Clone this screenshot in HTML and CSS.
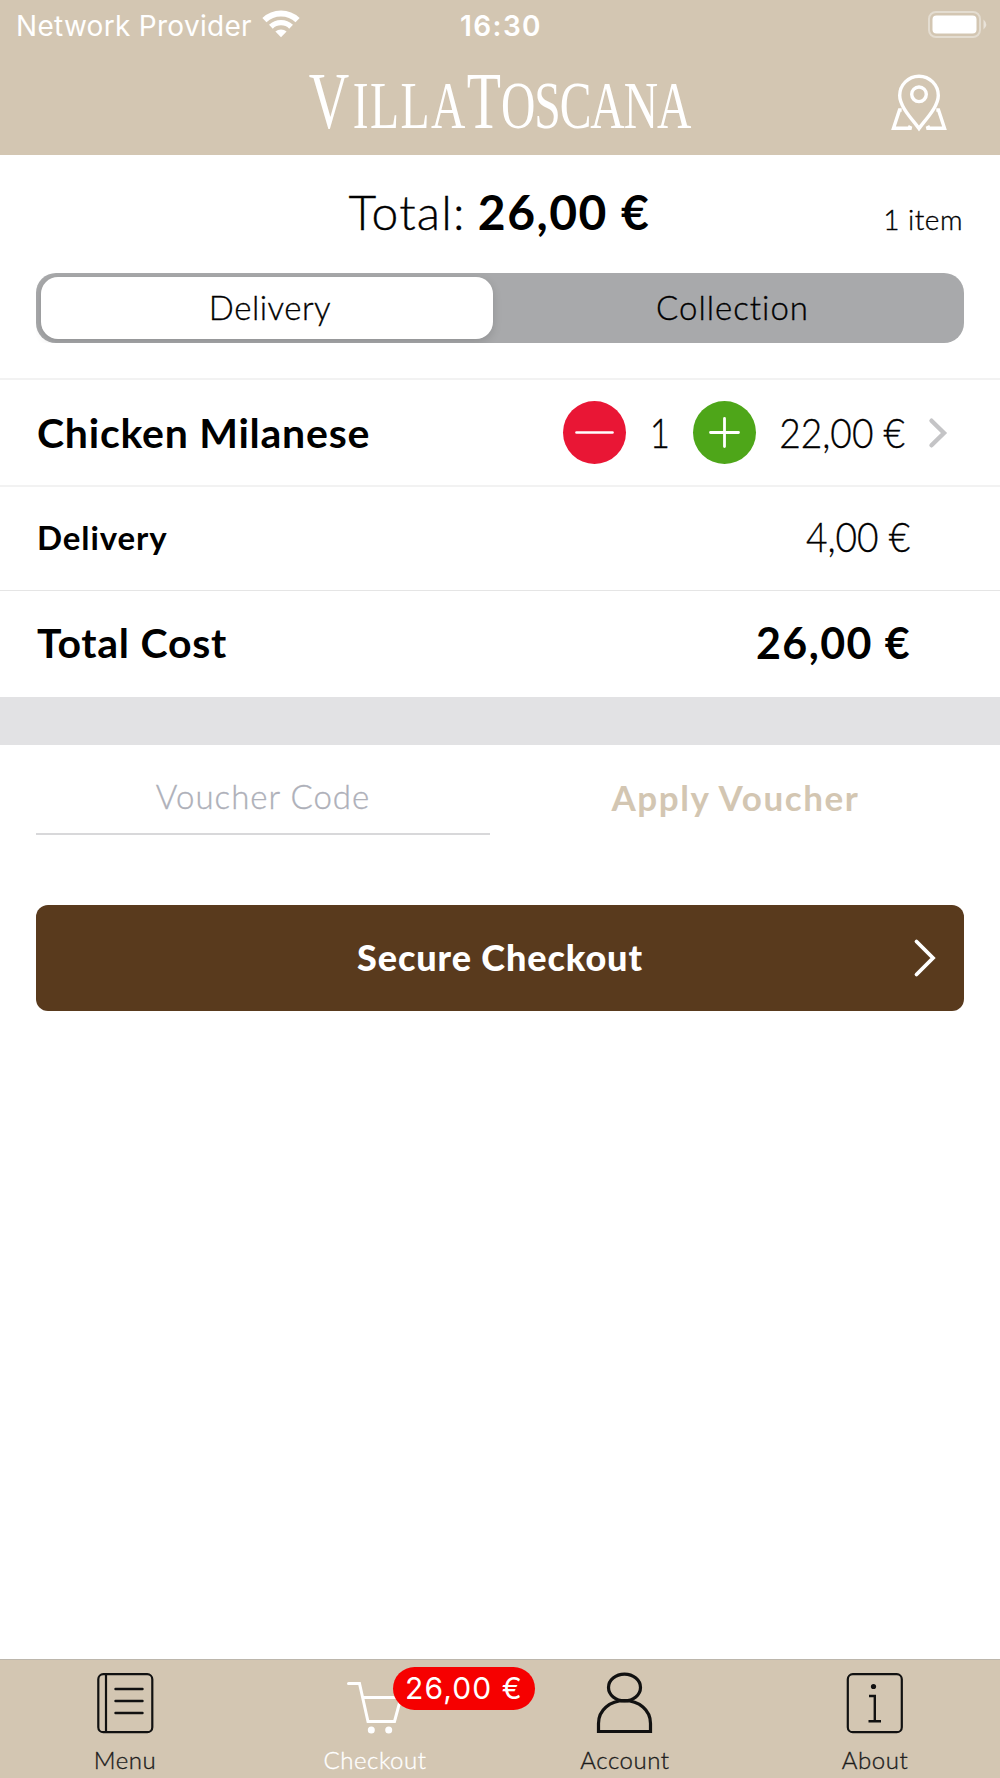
FILE: index.html
```html
<!DOCTYPE html>
<html lang="en">
<head>
<meta charset="utf-8">
<title>Villa Toscana – Checkout</title>
<link rel="stylesheet" href="styles.css">
</head>
<body>
<div class="screen">
  <header class="header">
    <div class="status">
      <div class="carrier">
        <span>Network Provider</span>
        <svg class="wifi" width="38" height="28" viewBox="0 0 38 28" fill="none" stroke="#fff" aria-hidden="true">
          <path d="M2.4 10.2 A24 24 0 0 1 35.6 10.2" stroke-width="6"/>
          <path d="M8.9 16.7 A14.6 14.6 0 0 1 29.1 16.7" stroke-width="5.4"/>
          <path d="M19 27.2 L13.4 21.6 A8.3 8.3 0 0 1 24.6 21.6 Z" fill="#fff" stroke="none"/>
        </svg>
      </div>
      <span class="clock">16:30</span>
      <svg class="battery" width="60" height="28" viewBox="0 0 60 28" aria-hidden="true">
        <rect x="2" y="2" width="51" height="25" rx="7" fill="none" stroke="#fff" stroke-opacity=".4" stroke-width="2"/>
        <rect x="5.500" y="5.500" width="44" height="18" rx="4" fill="#fff"/>
        <path d="M56.500 9.500 Q62 14.500 56.500 19.500 Z" fill="#fff" fill-opacity=".5"/>
      </svg>
    </div>
    <div class="nav">
      <div class="logo"><span class="cap cap-v">V</span><span class="illa">illa</span><span class="cap">T</span><span class="oscana">oscana</span></div>
      <svg class="pin" width="58" height="58" viewBox="0 0 58 58" fill="none" stroke="#fff" stroke-width="3.4" aria-hidden="true">
        <path d="M29 54.500 C23 46 9.700 33 9.700 21.500 A19.300 19.300 0 0 1 48.300 21.500 C48.300 33 35 46 29 54.500 Z"/>
        <circle cx="29" cy="20.300" r="7.300"/>
        <path d="M11.700 36 H9.500 L3.500 54.300 H21.500 L18 52.500"/>
        <path d="M46.300 36 H48.500 L54.500 54.300 H36.500 L40 52.500"/>
      </svg>
    </div>
  </header>

  <section class="summary">
    <div class="total"><span class="total-label">Total:</span><strong class="total-value">26,00 €</strong></div>
    <span class="count">1 item</span>
  </section>

  <div class="segmented">
    <div class="segment segment-active">Delivery</div>
    <div class="segment">Collection</div>
  </div>

  <ul class="list">
    <li class="row row-item">
      <span class="name">Chicken Milanese</span>
      <svg width="63" height="63" viewBox="0 0 63 63" aria-hidden="true">
        <circle cx="31.500" cy="31.500" r="31.500" fill="#e91635"/>
        <path d="M13.500 31.500 H49.500" stroke="#fff" stroke-width="2.600" stroke-linecap="round"/>
      </svg>
      <span class="qty"><span class="digit">1</span></span>
      <svg width="63" height="63" viewBox="0 0 63 63" aria-hidden="true">
        <circle cx="31.500" cy="31.500" r="31.500" fill="#4ea619"/>
        <path d="M17.500 31.500 H45.500 M31.500 17.500 V45.500" stroke="#fff" stroke-width="2.800" stroke-linecap="round"/>
      </svg>
      <span class="price price-item"><span class="narrow">22,00 €</span></span>
      <svg class="chevron" width="20" height="32" viewBox="0 0 20 32" fill="none" stroke="#c4c4c6" stroke-width="4.400" stroke-linecap="round" aria-hidden="true">
        <path d="M3.500 3.700 L16 16 L3.500 28.300"/>
      </svg>
    </li>
    <li class="row row-delivery">
      <span class="name name-small">Delivery</span>
      <span class="price"><span class="narrow">4,00 €</span></span>
    </li>
    <li class="row row-total">
      <span class="name">Total Cost</span>
      <strong class="price-total">26,00 €</strong>
    </li>
  </ul>

  <div class="band"></div>

  <section class="voucher">
    <div class="voucher-field">Voucher Code</div>
    <div class="voucher-apply">Apply Voucher</div>
  </section>

  <div class="checkout">
    <span class="checkout-label">Secure Checkout</span>
    <svg class="checkout-arrow" width="24" height="40" viewBox="0 0 24 40" fill="none" stroke="#fff" stroke-width="3.800" stroke-linecap="round" aria-hidden="true">
      <path d="M3.500 3.500 L20 20 L3.500 36.500"/>
    </svg>
  </div>

  <nav class="tabs">
    <div class="tab">
      <svg width="60" height="62" viewBox="0 0 60 62" fill="none" stroke="#111" stroke-width="2.200" aria-hidden="true">
        <rect x="3.300" y="2.200" width="54" height="58" rx="5"/>
        <path d="M11 2 V60"/>
        <path d="M20.500 17 H47.500 M20.500 29 H47.500 M20.500 41 H47.500" stroke-linecap="round" stroke-width="2.400"/>
      </svg>
      <span>Menu</span>
    </div>
    <div class="tab tab-active">
      <svg width="60" height="62" viewBox="0 0 60 62" fill="none" stroke="#fff" stroke-width="3" aria-hidden="true">
        <path d="M3.500 11.500 H14.500 L23 49.500 H49.500 L56 25.500 H18" stroke-linecap="round"/>
        <circle cx="26.300" cy="58" r="3.500" fill="#fff" stroke="none"/>
        <circle cx="43.700" cy="58" r="3.500" fill="#fff" stroke="none"/>
      </svg>
      <span>Checkout</span>
      <span class="badge">26,00 €</span>
    </div>
    <div class="tab">
      <svg width="60" height="62" viewBox="0 0 60 62" fill="none" stroke="#111" stroke-width="3.200" aria-hidden="true">
        <ellipse cx="29.500" cy="15.500" rx="16" ry="13.300"/>
        <path d="M3.500 59.500 V51.500 C3.500 38 15 28.700 29.500 28.700 S55.500 38 55.500 51.500 V59.500 Z"/>
      </svg>
      <span>Account</span>
    </div>
    <div class="tab">
      <svg width="60" height="62" viewBox="0 0 60 62" fill="none" stroke="#111" stroke-width="2.200" aria-hidden="true">
        <rect x="2.800" y="2.200" width="54" height="58" rx="5"/>
        <circle cx="28.500" cy="14.500" r="2.600" fill="#111" stroke="none"/>
        <path d="M24 24 H29.800 V49 M23.500 49.300 H36" stroke-width="2.400"/>
      </svg>
      <span>About</span>
    </div>
  </nav>
</div>
</body>
</html>
```
FILE: styles.css
```css
* { box-sizing: border-box; }

body {
  margin: 0;
  background: #fff;
  color: #000;
  font-family: Lato, "Liberation Sans", sans-serif;
  font-weight: 300;
}

svg { display: block; flex: none; overflow: visible; }

.screen {
  width: 1000px;
  height: 1778px;
  display: flex;
  flex-direction: column;
  white-space: nowrap;
}

/* Header */
.header {
  height: 155px;
  background: #d3c6b2;
  color: #fff;
}

.status {
  height: 51px;
  display: grid;
  grid-template-columns: 1fr auto 1fr;
  align-items: center;
  padding: 0 13px 0 16px;
  font: 400 28px Inter, "Liberation Sans", sans-serif;
}

.carrier {
  display: flex;
  align-items: center;
  gap: 10px;
  letter-spacing: 0.3px;
}

.wifi { margin-bottom: 3px; }
.clock { padding-right: 1px; font-weight: 600; letter-spacing: 1.4px; }
.battery { justify-self: end; margin-bottom: 3px; }

.nav {
  height: 104px;
  display: grid;
  grid-template-columns: 1fr auto 1fr;
  align-items: center;
  padding-bottom: 2px;
}

.logo {
  grid-column: 2;
  padding-top: 2px;
  font: 400 68px/56px "Liberation Serif", serif;
  font-kerning: none;
  text-transform: uppercase;
  transform: scaleX(0.7);
}

.cap { font-size: 80px; }
.cap-v { margin-right: 5px; }
.illa { letter-spacing: 2px; }
.oscana { letter-spacing: -1.5px; }

.pin { justify-self: end; margin: 2px 52px 0 0; }

/* Order total */
.summary {
  height: 118px;
  display: grid;
  grid-template-columns: 1fr auto 1fr;
  align-items: baseline;
  padding: 0 37px 0 38px;
  line-height: 114px;
}

.total {
  grid-column: 2;
  display: flex;
  gap: 12px;
  padding-right: 2px;
  font-size: 48px;
  letter-spacing: 1.2px;
}

.total-label, .count, .segment, .qty, .price, .voucher-field, .tab {
  -webkit-text-stroke: 0.35px currentColor;
}

.total-value { font-weight: 700; letter-spacing: 1.5px; }
.count { justify-self: end; font-size: 28px; letter-spacing: 0.5px; line-height: 1; }

.segmented {
  height: 70px;
  margin: 0 36px;
  padding: 4px 5px;
  display: grid;
  grid-template-columns: 452px 1fr;
  gap: 7px;
  border-radius: 20px;
  background: #a8a9ab;
  font-size: 33px;
}

.segment {
  display: flex;
  align-items: center;
  justify-content: center;
  padding: 0 0 3px 6px;
  letter-spacing: 1px;
}

.segment-active {
  border-radius: 17px;
  background: #fff;
  box-shadow: 0 3px 10px rgba(0, 0, 0, 0.14);
  clip-path: inset(-4px -20px -4px -5px);
  letter-spacing: 0.5px;
}

/* Basket rows */
.list {
  margin: 35px 0 0;
  padding: 0;
  list-style: none;
}

.row {
  display: flex;
  align-items: center;
  padding: 0 89px 0 37px;
  font-size: 41px;
}

.row-item {
  height: 107px;
  padding-right: 52px;
  border-top: 2px solid #f2f2f2;
}

.row-delivery {
  height: 105px;
  padding-right: 90px;
  padding-bottom: 4px;
  border-top: 2px solid #f2f2f2;
}

.row-total {
  height: 107px;
  padding-bottom: 3px;
  border-top: 1px solid #e5e5e5;
}

.name { margin-right: auto; font-weight: 700; letter-spacing: 0.75px; }
.name-small { font-size: 33px; letter-spacing: 0.9px; }
.qty { width: 67px; text-align: center; }
.digit { display: inline-block; transform: scaleX(0.85); }
.narrow { display: inline-block; transform: scaleX(0.905); transform-origin: right; }
.price-item { width: 149px; text-align: right; }
.price-total { font-size: 43px; font-weight: 700; letter-spacing: 1.4px; }
.chevron { margin-left: 23px; }

.band { height: 48px; background: #e2e2e4; }

/* Voucher */
.voucher {
  height: 90px;
  margin: 0 36px;
  display: grid;
  grid-template-columns: 454px 1fr;
}

.voucher-field,
.voucher-apply {
  display: flex;
  align-items: center;
  justify-content: center;
}

.voucher-field {
  padding-top: 14px;
  border-bottom: 2px solid #d8d8da;
  color: #aeb0b9;
  font-size: 33px;
  letter-spacing: 1px;
}

.voucher-apply {
  padding: 13px 0 0 17px;
  color: #d3c6b2;
  font-size: 35px;
  font-weight: 700;
  letter-spacing: 1.6px;
}

.checkout {
  height: 106px;
  margin: 70px 36px 0;
  padding: 0 27px;
  display: grid;
  grid-template-columns: 1fr auto 1fr;
  align-items: center;
  border-radius: 12px;
  background: #593a1d;
  color: #fff;
}

.checkout-label {
  grid-column: 2;
  padding-bottom: 2px;
  font-size: 36px;
  font-weight: 900;
  letter-spacing: 0.9px;
}

.checkout-arrow { justify-self: end; }

/* Tab bar */
.tabs {
  height: 119px;
  margin-top: auto;
  display: grid;
  grid-template-columns: repeat(4, 1fr);
  border-top: 1px solid #bcb6ac;
  background: #d3c6b2;
  color: #1c1c1c;
}

.tab {
  position: relative;
  display: flex;
  flex-direction: column;
  align-items: center;
  padding-top: 12px;
  gap: 11px;
  font-size: 24px;
  letter-spacing: 0.55px;
}

.tab-active { color: #fff; }

.badge {
  position: absolute;
  left: 143px;
  top: 7px;
  width: 142px;
  height: 43px;
  border-radius: 22px;
  background: #f60000;
  color: #fff;
  font: 400 30px/43px Inter, "Liberation Sans", sans-serif;
  letter-spacing: 1.1px;
  text-align: center;
  -webkit-text-stroke: 0;
}
```
